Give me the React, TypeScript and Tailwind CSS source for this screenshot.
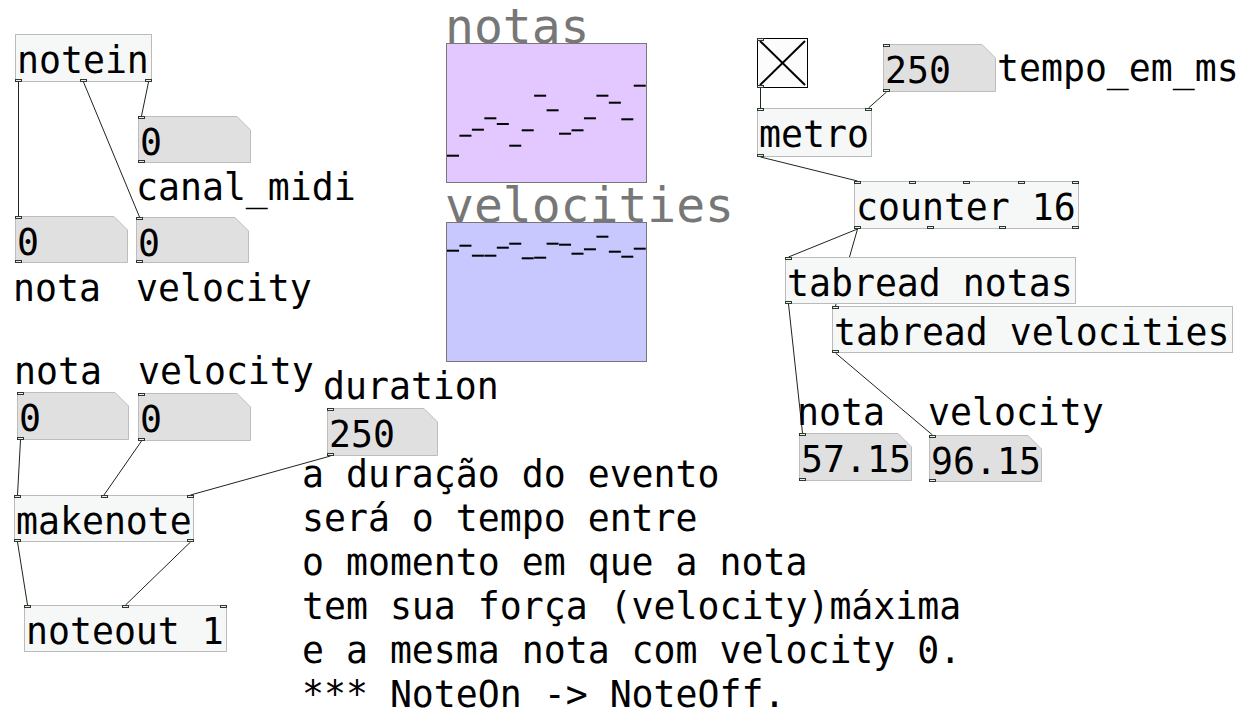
import React from 'react';

type Kind = 'obj' | 'num' | 'tgl';

interface PdNode {
  id: string;
  kind: Kind;
  x: number;
  y: number;
  w: number;
  h: number;
  text?: string;
  ins: number;
  outs: number;
}

const nodes: PdNode[] = [
  { id: 'notein', kind: 'obj', x: 15, y: 34, w: 137, h: 48, text: 'notein', ins: 0, outs: 3 },
  { id: 'canal', kind: 'num', x: 138, y: 116, w: 113, h: 47, text: '0', ins: 1, outs: 1 },
  { id: 'notaIn', kind: 'num', x: 15, y: 216, w: 113, h: 47, text: '0', ins: 1, outs: 1 },
  { id: 'velIn', kind: 'num', x: 136, y: 217, w: 113, h: 46, text: '0', ins: 1, outs: 1 },
  { id: 'toggle', kind: 'tgl', x: 757, y: 38, w: 51, h: 50, ins: 1, outs: 1 },
  { id: 'tempo', kind: 'num', x: 883, y: 44, w: 113, h: 48, text: '250', ins: 1, outs: 1 },
  { id: 'metro', kind: 'obj', x: 757, y: 108, w: 115, h: 49, text: 'metro', ins: 2, outs: 1 },
  { id: 'counter', kind: 'obj', x: 854, y: 181, w: 225, h: 48, text: 'counter 16', ins: 5, outs: 4 },
  { id: 'tabN', kind: 'obj', x: 785, y: 257, w: 291, h: 47, text: 'tabread notas', ins: 1, outs: 1 },
  { id: 'tabV', kind: 'obj', x: 832, y: 306, w: 401, h: 47, text: 'tabread velocities', ins: 1, outs: 1 },
  { id: 'notaOut', kind: 'num', x: 799, y: 433, w: 113, h: 48, text: '57.15', ins: 1, outs: 1 },
  { id: 'velOut', kind: 'num', x: 929, y: 435, w: 113, h: 47, text: '96.15', ins: 1, outs: 1 },
  { id: 'nota', kind: 'num', x: 17, y: 392, w: 112, h: 48, text: '0', ins: 1, outs: 1 },
  { id: 'vel', kind: 'num', x: 138, y: 393, w: 113, h: 48, text: '0', ins: 1, outs: 1 },
  { id: 'dur', kind: 'num', x: 327, y: 408, w: 111, h: 48, text: '250', ins: 1, outs: 1 },
  { id: 'makenote', kind: 'obj', x: 14, y: 495, w: 180, h: 47, text: 'makenote', ins: 3, outs: 2 },
  { id: 'noteout', kind: 'obj', x: 24, y: 605, w: 203, h: 47, text: 'noteout 1', ins: 3, outs: 0 },
];

// [from, outlet, to, inlet]
const wires: [string, number, string, number][] = [
  ['notein', 0, 'notaIn', 0],
  ['notein', 1, 'velIn', 0],
  ['notein', 2, 'canal', 0],
  ['toggle', 0, 'metro', 0],
  ['tempo', 0, 'metro', 1],
  ['metro', 0, 'counter', 0],
  ['counter', 0, 'tabN', 0],
  ['counter', 0, 'tabV', 0],
  ['tabN', 0, 'notaOut', 0],
  ['tabV', 0, 'velOut', 0],
  ['nota', 0, 'makenote', 0],
  ['vel', 0, 'makenote', 1],
  ['dur', 0, 'makenote', 2],
  ['makenote', 0, 'noteout', 0],
  ['makenote', 1, 'noteout', 1],
];

// comments: text, x, top
const comments: [string, number, number][] = [
  ['canal_midi', 136, 166],
  ['nota', 13, 267],
  ['velocity', 136, 267],
  ['nota', 14, 350],
  ['velocity', 138, 350],
  ['duration', 323, 365],
  ['tempo_em_ms', 997, 47],
  ['nota', 797, 391],
  ['velocity', 928, 391],
];

const notas = [112.7, 92.7, 86.7, 75.3, 81, 102.7, 87.3, 52.7, 67.3, 90.7, 87.3, 75.3, 52.7, 59.7, 76.3, 42.7];
const velocities = [28.7, 23.7, 33.7, 33.7, 25.7, 21.7, 36.3, 35.7, 21.7, 22.7, 31.7, 27.3, 14.7, 29.7, 34.7, 26.7];

const byId = Object.fromEntries(nodes.map((n) => [n.id, n]));

function portX(n: PdNode, i: number, count: number) {
  if (count <= 1) return n.x;
  return n.x + ((n.w - 7) * i) / (count - 1);
}

function Port({ left, top }: { left: number; top: number }) {
  return (
    <div
      className="absolute w-[7px] h-[3px] border border-[#2c3a2c] bg-[#e6eee6]"
      style={{ left, top }}
    />
  );
}

function NodeBox({ n }: { n: PdNode }) {
  const ports: React.ReactNode[] = [];
  for (let i = 0; i < n.ins; i++) ports.push(<Port key={'i' + i} left={portX(n, i, n.ins) - n.x} top={0} />);
  for (let i = 0; i < n.outs; i++) ports.push(<Port key={'o' + i} left={portX(n, i, n.outs) - n.x} top={n.h - 3} />);

  return (
    <div className="absolute" style={{ left: n.x, top: n.y, width: n.w, height: n.h }}>
      {n.kind === 'obj' && <div className="absolute inset-0 border border-[#bbbbbb] bg-[#f6f8f8]" />}
      {n.kind === 'num' && (
        <svg className="absolute inset-0" width={n.w} height={n.h}>
          <polygon
            points={`0.5,0.5 ${n.w - 14},0.5 ${n.w - 0.5},14 ${n.w - 0.5},${n.h - 0.5} 0.5,${n.h - 0.5}`}
            fill="#e0e0e0"
            stroke="#bdbdbd"
          />
        </svg>
      )}
      {n.kind === 'tgl' && (
        <div className="absolute inset-0 border border-black bg-[#fcfcfc]">
          <svg className="absolute inset-0" width={n.w - 2} height={n.h - 2}>
            <line x1={2} y1={2} x2={n.w - 4} y2={n.h - 4} stroke="#000" strokeWidth={2} />
            <line x1={n.w - 4} y1={2} x2={2} y2={n.h - 4} stroke="#000" strokeWidth={2} />
          </svg>
        </div>
      )}
      {n.text && (
        <span className="absolute left-[2px] top-[5px] whitespace-pre text-[36.5px] leading-[44px] text-black">
          {n.text}
        </span>
      )}
      {ports}
    </div>
  );
}

function ArrayGraph({ top, label, data, bg }: { top: number; label: string; data: number[]; bg: string }) {
  return (
    <>
      <span
        className="absolute left-[445px] whitespace-pre text-[48px] leading-[48px] text-[#777777]"
        style={{ top: top - 41 }}
      >
        {label}
      </span>
      <div className={`absolute left-[446px] w-[201px] h-[140px] border border-[#777777] ${bg}`} style={{ top }}>
        <svg className="absolute inset-0" width={199} height={138}>
          {data.map((v, i) => (
            <rect key={i} x={i * 12.45} y={v - 2} width={12} height={2} fill="#000" />
          ))}
        </svg>
      </div>
    </>
  );
}

export default function App() {
  return (
    <div className="relative w-[1241px] h-[715px] overflow-hidden bg-white font-['DejaVu_Sans_Mono',monospace] text-black">
      <svg className="absolute inset-0" width={1241} height={715}>
        {wires.map(([a, o, b, i], k) => {
          const from = byId[a];
          const to = byId[b];
          const x1 = portX(from, o, from.outs) + 3.5;
          const x2 = portX(to, i, to.ins) + 3.5;
          return <line key={k} x1={x1} y1={from.y + from.h} x2={x2} y2={to.y} stroke="#1c261c" strokeWidth={1} />;
        })}
      </svg>

      <ArrayGraph top={43} label="notas" data={notas} bg="bg-[#e2c8ff]" />
      <ArrayGraph top={222} label="velocities" data={velocities} bg="bg-[#c8c8ff]" />

      {nodes.map((n) => (
        <NodeBox key={n.id} n={n} />
      ))}

      {comments.map(([t, x, y], k) => (
        <span
          key={k}
          className="absolute whitespace-pre text-[36.5px] leading-[44px]"
          style={{ left: x, top: y }}
        >
          {t}
        </span>
      ))}

      <div className="absolute left-[302px] top-[453px] whitespace-pre text-[36.5px] leading-[43.9px]">
        {'a duração do evento\nserá o tempo entre\no momento em que a nota\ntem sua força (velocity)máxima\ne a mesma nota com velocity 0.\n*** NoteOn -> NoteOff.'}
      </div>
    </div>
  );
}
